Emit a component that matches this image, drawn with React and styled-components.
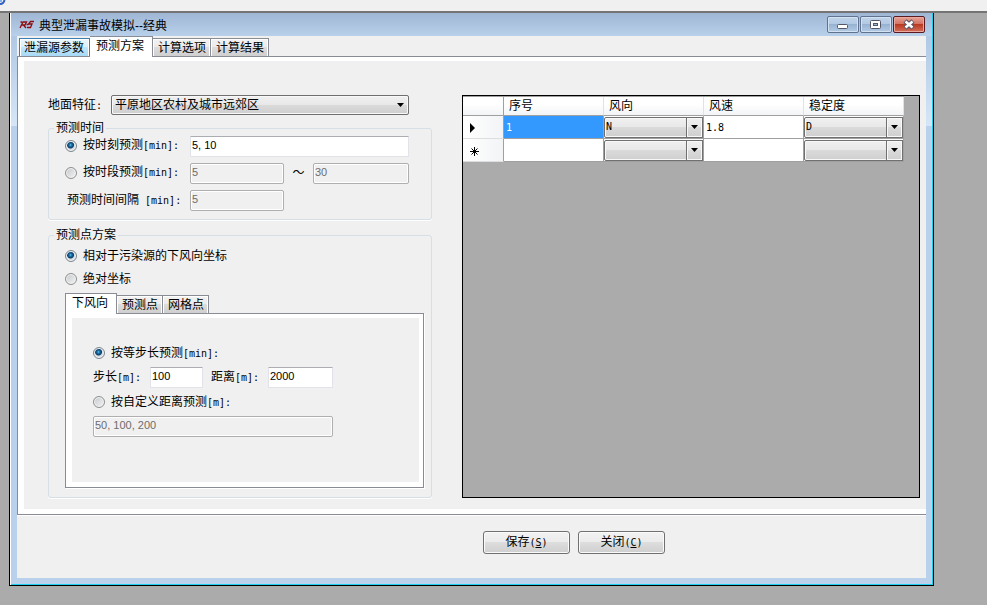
import React, { useState } from "react";
import styled, { createGlobalStyle, css } from "styled-components";

const Global = createGlobalStyle`
  *, *::before, *::after { box-sizing: border-box; }
  body {
    margin: 0;
    background: #ababab;
    color: #000;
    font: 12px/16px "Liberation Sans", "Noto Sans CJK SC", sans-serif;
  }
  button, input, select { font: inherit; color: inherit; margin: 0; }
`;

const Desktop = styled.div`
  min-height: 100vh;
  display: flex;
  flex-direction: column;
`;

const TopStrip = styled.div`
  height: 13px;
  background: #f0f0f0;
  border-bottom: 2px solid #747474;
  svg { display: block; }
`;

const Window = styled.main`
  margin: 0 53px 19px 9px;
  border: 1px solid #000;
  border-top: 0;
  box-shadow: inset 1px 0 #fff, inset -1px -1px #1fd0ee;
  background:
    linear-gradient(#b0c8e4, #d6e6f7) right 1px top 23px / 6px 90px no-repeat,
    linear-gradient(#b0c8e4, #d6e6f7) left 1px top 23px / 6px 90px no-repeat,
    linear-gradient(#9fb7d5, #b9d1ea 24px);
  padding: 0 7px 7px;
`;

const TitleBar = styled.header`
  height: 23px;
  display: flex;
  align-items: center;
  gap: 4px;
  padding: 0 1px 0 2px;
`;

const Title = styled.h1`
  flex: 1;
  margin: 0;
  padding-top: 2px;
  font-size: 12px;
  font-weight: 400;
`;

const CaptionButtons = styled.div`
  display: flex;
  gap: 1px;
`;

const CaptionButton = styled.button`
  width: 32px;
  height: 17px;
  padding: 0;
  display: grid;
  place-items: center;
  border: 1px solid ${(p) => (p.$danger ? "#5a1a20" : "#5f7391")};
  border-radius: 2px;
  box-shadow: inset 0 0 0 1px ${(p) => (p.$danger ? "#e9a99f" : "#d3e1f0")};
  background: ${(p) =>
    p.$danger
      ? "linear-gradient(#e5a396, #d3705f 48%, #b93a22 50%, #d4705c)"
      : "linear-gradient(#c0d3ea, #b3c9e3 48%, #98b3d2 50%, #b2cbe6)"};
`;

const Client = styled.div`
  background: #f0f0f0;
`;

const TabStrip = styled.div`
  display: flex;
  align-items: flex-end;
  height: 20px;
  padding-left: ${(p) => (p.$inset ? "2px" : "0")};
`;

const Tab = styled.button`
  height: 18px;
  padding: 2px 4px 0 5px;
  border: 1px solid #898c95;
  border-bottom: 0;
  box-shadow: inset 1px 1px #fff, inset -1px 0 #fff;
  background: linear-gradient(#f2f2f2, #ebebeb 48%, #dcdcdc 50%, #cfcfcf);
  line-height: 15px;
  white-space: nowrap;
  & + & { border-left: 0; }
  ${(p) =>
    p.$hot &&
    css`
      padding: 2px 5px 0 4px;
      border-color: #3c7fb1;
      background: linear-gradient(#eaf6fd, #d9f0fc 48%, #bee6fd 50%, #a7d9f5);
    `}
  ${(p) =>
    p.$active &&
    css`
      && { border-left: 1px solid #898c95; }
      height: 21px;
      margin-bottom: -1px;
      padding: 0 8px 1px 6px;
      background: #fff;
      box-shadow: none;
    `}
`;

const Page = styled.section`
  border: 1px solid #898c95;
  border-right: 0;
  box-shadow: 0 1px #fff;
  background: #fff;
  padding: 4px 0 5px 6px;
`;

const PageBody = styled.div`
  background: #f0f0f0;
  padding: 34px 6px 11px 24px;
  display: grid;
  grid-template-columns: 384px minmax(0, 1fr);
  gap: 30px;
`;

const Terrain = styled.div`
  display: grid;
  grid-template-columns: 63px 298px;
  align-items: center;
  height: 20px;
  margin-bottom: 5px;
`;

const SelectBox = styled.div`
  position: relative;
  display: flex;
  svg {
    position: absolute;
    right: 5px;
    top: 8px;
    pointer-events: none;
  }
`;

const Select = styled.select`
  appearance: none;
  width: 100%;
  height: 20px;
  padding: 0 18px 0 3px;
  border: 1px solid #707070;
  border-radius: 2px;
  box-shadow: inset 0 0 0 1px #f8f8f8;
  background: linear-gradient(#f0f0f0, #e8e8e8 48%, #dadada 50%, #cfcfcf);
  line-height: 18px;
`;

const Group = styled.fieldset`
  margin: 0 0 ${(p) => (p.$last ? "0" : "7px")};
  padding: 0;
  min-width: 0;
  border: 1px solid #d5dfe5;
  border-radius: 3px;
  box-shadow: 0 1px #fff;
  legend {
    height: 16px;
    margin-left: 5px;
    padding: 0 2px;
    line-height: 16px;
  }
`;

const TimeRows = styled.div`
  display: grid;
  grid-template-columns: 125px 219px;
  grid-auto-rows: 21px;
  row-gap: 6px;
  padding: 0 0 8px 16px;
`;

const RadioLabel = styled.label`
  display: flex;
  align-items: center;
  gap: 6px;
  height: ${(p) => p.$height}px;
  white-space: nowrap;
`;

const PlainLabel = styled.label`
  line-height: 20px;
  padding-left: ${(p) => (p.$indent ? "2px" : "0")};
  white-space: nowrap;
`;

const Radio = styled.input`
  appearance: none;
  width: 12px;
  height: 12px;
  border: 1px solid #8e8f8f;
  border-radius: 50%;
  box-shadow: inset 0 0 0 1px #f4f4f4;
  background: linear-gradient(135deg, #c4c8cc, #f4f4f4);
  &:checked {
    border-color: #7d8790;
    background: radial-gradient(circle at 45% 40%, #7fd6f5 0, #1f7fb8 1px, #0d3b66 3px, #d5dde3 4px);
  }
`;

const Latin = styled.span`
  font: 10px/16px "DejaVu Sans Mono", monospace;
`;

const TextInput = styled.input`
  width: 100%;
  min-width: 0;
  height: 21px;
  padding: 0 1px 3px;
  border: 1px solid #e2e3ea;
  border-top-color: #abadb3;
  border-radius: 1px;
  background: #fff;
  font-size: 11px;
  &:disabled {
    border-color: #afafaf;
    border-radius: 2px;
    box-shadow: inset 0 0 0 1px #fff;
    background: #f0f0f0;
    color: #6d6d6d;
  }
`;

const Range = styled.div`
  display: grid;
  grid-template-columns: 94px 29px 96px;
  text-align: center;
  line-height: 20px;
`;

const PointRows = styled.div`
  padding: 1px 7px 9px 16px;
`;

const SubTabs = styled.div`
  margin-top: 3px;
`;

const SubPage = styled.div`
  border: 1px solid #898c95;
  background: #fff;
  box-shadow: 1px 1px #fff;
  padding: 4px 4px 5px 6px;
`;

const SubBody = styled.div`
  background: #f0f0f0;
  display: grid;
  row-gap: 5px;
  padding: 26px 86px 45px 21px;
`;

const StepRow = styled.div`
  display: flex;
  gap: 8px;
`;

const StepField = styled.div`
  display: grid;
  grid-template-columns: 57px ${(p) => p.$width}px;
`;

const GridFrame = styled.div`
  border: 1px solid #000;
  background: #ababab;
  overflow: hidden;
`;

const Table = styled.table`
  table-layout: fixed;
  width: 441px;
  border-spacing: 0;
  border-top: 1px solid #a0a0a0;
  td, th {
    padding: 0;
    font-weight: 400;
    text-align: left;
  }
`;

const ColHead = styled.th`
  width: ${(p) => (p.$corner ? "41px" : "100px")};
  height: 19px;
  border-bottom: 1px solid #a0a0a0;
  border-right: 1px solid ${(p) => (p.$corner ? "#a0a0a0" : "#e0e2e4")};
  background: linear-gradient(#fff 40%, #f3f4f6);
  && { padding-left: 5px; }
  line-height: 18px;
`;

const RowHead = styled.th`
  height: 23px;
  border-right: 1px solid #a0a0a0;
  border-bottom: 1px solid #dcdee0;
  background: linear-gradient(90deg, #fff, #f3f4f6);
  && { padding: 2px 0 0 6px; }
  svg { display: block; }
`;

const Cell = styled.td`
  border-right: 1px solid #a0a0a0;
  border-bottom: 1px solid #a0a0a0;
  background: ${(p) => (p.$selected ? "#3399ff" : "#fff")};
  color: ${(p) => (p.$selected ? "#fff" : "#000")};
  && { padding: ${(p) => (p.$pick ? "0" : "0 2px")}; }
`;

const CellSelect = styled(Select)`
  height: 21px;
  padding: 0 16px 0 1px;
  font: 10px/18px "DejaVu Sans Mono", monospace;
`;

const ArrowBox = styled.span`
  position: absolute;
  top: 0;
  right: 0;
  bottom: 0;
  width: 17px;
  border: 1px solid #707070;
  box-shadow: inset 0 0 0 1px #f8f8f8;
  pointer-events: none;
`;

const Footer = styled.footer`
  display: flex;
  gap: 8px;
  padding: 16px 0 24px 466px;
`;

const PushButton = styled.button`
  width: 87px;
  height: 23px;
  padding: 0;
  border: 1px solid #707070;
  border-radius: 3px;
  box-shadow: inset 0 0 0 1px #fafafa;
  background: linear-gradient(#f2f2f2, #ebebeb 48%, #dddddd 50%, #cfcfcf);
`;

const Arrow = () => (
  <svg width="7" height="4" viewBox="0 0 7 4" aria-hidden="true">
    <path d="M0 0h7L3.500 4z" fill="#000" />
  </svg>
);

const AppIcon = () => (
  <svg width="16" height="16" viewBox="0 0 16 16" fill="none" stroke="#8d0d12" strokeWidth="1.300" aria-hidden="true">
    <path d="M1 11L4 5h3.500L6 8H2.500M4.500 8L7 11M3 5H1.500" />
    <path d="M15 4.500h-3.500L9.500 7h3.500L11.500 10.500H8M7.500 7.500h2" />
  </svg>
);

function Combo({ label, value }) {
  const [current, setCurrent] = useState(value);
  return (
    <SelectBox>
      <CellSelect aria-label={label} value={current} onChange={(e) => setCurrent(e.target.value)}>
        <option value="" />
        <option>N</option>
        <option>D</option>
      </CellSelect>
      <ArrowBox />
      <Arrow />
    </SelectBox>
  );
}

export default function App() {
  const [time, setTime] = useState("moment");
  const [coord, setCoord] = useState("relative");
  const [step, setStep] = useState("equal");
  return (
    <Desktop>
      <Global />
      <TopStrip>
        <svg width="8" height="6" viewBox="0 0 8 6" aria-hidden="true">
          <path d="M0 0h2v2H0z" fill="#7fb2ea" />
          <path d="M0 4C2.500 4 4 2.500 4.500 0" fill="none" stroke="#2f5fc0" strokeWidth="2" />
        </svg>
      </TopStrip>
      <Window>
        <TitleBar>
          <AppIcon />
          <Title>典型泄漏事故模拟--经典</Title>
          <CaptionButtons>
            <CaptionButton aria-label="最小化">
              <svg width="12" height="11" viewBox="0 0 12 11">
                <rect x="0.500" y="5.500" width="10" height="4" rx="1" fill="#fff" stroke="#535666" />
              </svg>
            </CaptionButton>
            <CaptionButton aria-label="最大化">
              <svg width="12" height="11" viewBox="0 0 12 11">
                <rect x="0.500" y="1.500" width="10" height="8" rx="1" fill="#fff" stroke="#535666" />
                <rect x="3.500" y="4.500" width="4" height="2" fill="#9db7d6" stroke="#535666" />
              </svg>
            </CaptionButton>
            <CaptionButton $danger aria-label="关闭">
              <svg width="12" height="11" viewBox="0 0 12 11">
                <path d="M2 2l8 7M10 2l-8 7" stroke="#535666" strokeWidth="4.500" />
                <path d="M2.500 2.500l7 6M9.500 2.500l-7 6" stroke="#fff" strokeWidth="2.500" />
              </svg>
            </CaptionButton>
          </CaptionButtons>
        </TitleBar>

        <Client>
          <TabStrip $inset role="tablist">
            <Tab role="tab" $hot>泄漏源参数</Tab>
            <Tab role="tab" $active aria-selected="true">预测方案</Tab>
            <Tab role="tab">计算选项</Tab>
            <Tab role="tab">计算结果</Tab>
          </TabStrip>

          <Page>
            <PageBody>
              <div>
                <Terrain>
                  <PlainLabel htmlFor="terrain">地面特征<Latin>:</Latin></PlainLabel>
                  <SelectBox>
                    <Select id="terrain">
                      <option>平原地区农村及城市远郊区</option>
                    </Select>
                    <Arrow />
                  </SelectBox>
                </Terrain>

                <Group>
                  <legend>预测时间</legend>
                  <TimeRows>
                    <RadioLabel $height={19}>
                      <Radio type="radio" name="time" checked={time === "moment"} onChange={() => setTime("moment")} />
                      <span>按时刻预测<Latin>[min]:</Latin></span>
                    </RadioLabel>
                    <TextInput aria-label="按时刻预测" defaultValue="5, 10" disabled={time !== "moment"} />
                    <RadioLabel $height={19}>
                      <Radio type="radio" name="time" checked={time === "period"} onChange={() => setTime("period")} />
                      <span>按时段预测<Latin>[min]:</Latin></span>
                    </RadioLabel>
                    <Range>
                      <TextInput aria-label="时段起" defaultValue="5" disabled={time !== "period"} />
                      <span>～</span>
                      <TextInput aria-label="时段止" defaultValue="30" disabled={time !== "period"} />
                    </Range>
                    <PlainLabel $indent htmlFor="interval">预测时间间隔<Latin> [min]:</Latin></PlainLabel>
                    <Range>
                      <TextInput id="interval" defaultValue="5" disabled={time !== "period"} />
                    </Range>
                  </TimeRows>
                </Group>

                <Group $last>
                  <legend>预测点方案</legend>
                  <PointRows>
                    <RadioLabel $height={23}>
                      <Radio type="radio" name="coord" checked={coord === "relative"} onChange={() => setCoord("relative")} />
                      <span>相对于污染源的下风向坐标</span>
                    </RadioLabel>
                    <RadioLabel $height={23}>
                      <Radio type="radio" name="coord" checked={coord === "absolute"} onChange={() => setCoord("absolute")} />
                      <span>绝对坐标</span>
                    </RadioLabel>
                    <SubTabs>
                      <TabStrip role="tablist">
                        <Tab role="tab" $active aria-selected="true">下风向</Tab>
                        <Tab role="tab">预测点</Tab>
                        <Tab role="tab">网格点</Tab>
                      </TabStrip>
                      <SubPage>
                        <SubBody>
                          <RadioLabel $height={18}>
                            <Radio type="radio" name="step" checked={step === "equal"} onChange={() => setStep("equal")} />
                            <span>按等步长预测<Latin>[min]:</Latin></span>
                          </RadioLabel>
                          <StepRow>
                            <StepField $width={53}>
                              <PlainLabel htmlFor="step">步长<Latin>[m]:</Latin></PlainLabel>
                              <TextInput id="step" defaultValue="100" disabled={step !== "equal"} />
                            </StepField>
                            <StepField $width={65}>
                              <PlainLabel htmlFor="distance">距离<Latin>[m]:</Latin></PlainLabel>
                              <TextInput id="distance" defaultValue="2000" disabled={step !== "equal"} />
                            </StepField>
                          </StepRow>
                          <RadioLabel $height={18}>
                            <Radio type="radio" name="step" checked={step === "custom"} onChange={() => setStep("custom")} />
                            <span>按自定义距离预测<Latin>[m]:</Latin></span>
                          </RadioLabel>
                          <TextInput aria-label="按自定义距离预测" defaultValue="50, 100, 200" disabled={step !== "custom"} />
                        </SubBody>
                      </SubPage>
                    </SubTabs>
                  </PointRows>
                </Group>
              </div>

              <GridFrame>
                <Table>
                  <thead>
                    <tr>
                      <ColHead $corner />
                      <ColHead>序号</ColHead>
                      <ColHead>风向</ColHead>
                      <ColHead>风速</ColHead>
                      <ColHead>稳定度</ColHead>
                    </tr>
                  </thead>
                  <tbody>
                    <tr>
                      <RowHead>
                        <svg width="10" height="10" viewBox="0 0 10 10"><path d="M1 0v10l5-5z" /></svg>
                      </RowHead>
                      <Cell $selected><Latin>1</Latin></Cell>
                      <Cell $pick><Combo label="风向" value="N" /></Cell>
                      <Cell><Latin>1.8</Latin></Cell>
                      <Cell $pick><Combo label="稳定度" value="D" /></Cell>
                    </tr>
                    <tr>
                      <RowHead>
                        <svg width="11" height="11" viewBox="0 0 11 11" stroke="#000">
                          <path d="M5.500 1v9M1 5.500h9M2.500 2.500l6 6M8.500 2.500l-6 6" />
                        </svg>
                      </RowHead>
                      <Cell />
                      <Cell $pick><Combo label="风向" value="" /></Cell>
                      <Cell />
                      <Cell $pick><Combo label="稳定度" value="" /></Cell>
                    </tr>
                  </tbody>
                </Table>
              </GridFrame>
            </PageBody>
          </Page>

          <Footer>
            <PushButton>保存<Latin>(<u>S</u>)</Latin></PushButton>
            <PushButton>关闭<Latin>(<u>C</u>)</Latin></PushButton>
          </Footer>
        </Client>
      </Window>
    </Desktop>
  );
}
